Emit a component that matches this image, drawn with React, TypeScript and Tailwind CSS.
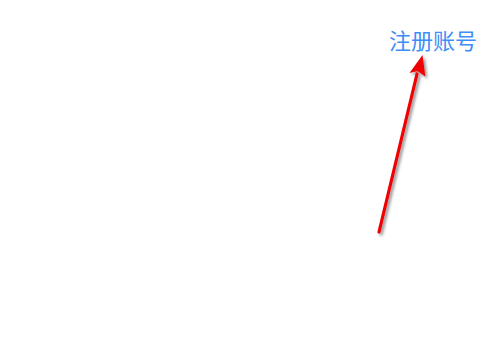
export default function App() {
  return (
    <div className="relative w-[490px] h-[338px] bg-white overflow-hidden">
      <div className="flex justify-end pt-[28px] pr-[13px]">
        <span
          className="text-[22px] leading-[22px] text-[#3d8ef6]"
          style={{ fontFamily: '"Noto Sans CJK SC", "Noto Sans", sans-serif' }}
        >
          注册账号
        </span>
      </div>
      <svg
        className="absolute inset-0 pointer-events-none"
        width="490"
        height="338"
        viewBox="0 0 490 338"
      >
        <defs>
          <filter id="sh" x="-50%" y="-50%" width="200%" height="200%">
            <feDropShadow dx="2" dy="2" stdDeviation="1.6" floodColor="#000" floodOpacity="0.45" />
          </filter>
        </defs>
        <g filter="url(#sh)">
          <line x1="379" y1="232" x2="417" y2="74" stroke="#f00000" strokeWidth="3.2" strokeLinecap="round" />
          <polygon points="422.5,55 409.5,73 417.5,71 425.3,76.5" fill="#f00000" />
        </g>
      </svg>
    </div>
  );
}
